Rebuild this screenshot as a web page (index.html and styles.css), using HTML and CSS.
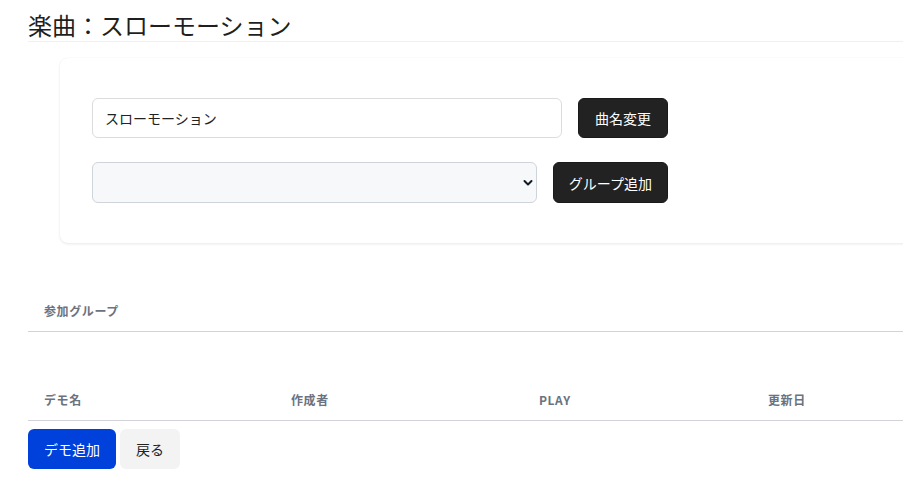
FILE: index.html
```html
<!DOCTYPE html>
<html lang="ja">
<head>
<meta charset="utf-8">
<title>楽曲：スローモーション</title>
<link rel="stylesheet" href="styles.css">
</head>
<body>
<div class="page">
  <h1 class="title">楽曲：スローモーション</h1>
  <div class="card">
    <div class="form-row">
      <input class="text-input" type="text" value="スローモーション">
      <button class="btn-dark">曲名変更</button>
    </div>
    <div class="form-row form-row-narrow">
      <div class="select-wrap">
        <select class="select"><option></option></select>
        <svg class="chevron" width="10" height="8" viewBox="0 0 10 8"><path d="M1.5 2 L5 5.5 L8.5 2" fill="none" stroke="#111827" stroke-width="2" stroke-linecap="round" stroke-linejoin="round"/></svg>
      </div>
      <button class="btn-dark">グループ追加</button>
    </div>
  </div>

  <table class="table table-groups">
    <thead><tr><th class="th">参加グループ</th></tr></thead>
    <tbody></tbody>
  </table>

  <table class="table table-demos">
    <thead>
      <tr>
        <th class="th col-1">デモ名</th>
        <th class="th col-2">作成者</th>
        <th class="th col-3">PLAY</th>
        <th class="th col-4">更新日</th>
      </tr>
    </thead>
    <tbody></tbody>
  </table>

  <div class="actions">
    <button class="btn-blue">デモ追加</button>
    <button class="btn-light">戻る</button>
  </div>
</div>
</body>
</html>
```

FILE: styles.css
```css
html, body {
  margin: 0;
  padding: 0;
  background: #ffffff;
  overflow: hidden;
}
body {
  font-family: "Noto Sans CJK JP", "Noto Sans", sans-serif;
  color: #222222;
}
.page {
  width: 972px;
  padding: 8px 0 0 28px;
}
.title {
  margin: 0;
  font-size: 24px;
  font-weight: 400;
  line-height: 33px;
  color: #1f1f1f;
  border-bottom: 1px solid #f0f0f0;
}
.card {
  margin: 16px 32px 0 32px;
  padding: 40px 32px;
  background: #ffffff;
  border-radius: 8px;
  box-shadow: 0 1px 3px rgba(0, 0, 0, 0.09), 0 0 1px rgba(0, 0, 0, 0.06);
  display: flex;
  flex-direction: column;
  gap: 24px;
}
.form-row {
  width: 576px;
  display: flex;
  gap: 16px;
  align-items: stretch;
}
.text-input {
  flex: 1;
  height: 40px;
  box-sizing: border-box;
  border: 1px solid #dcdcdc;
  border-radius: 6px;
  padding: 0 12px;
  font-family: inherit;
  font-size: 14px;
  color: #222;
  background: #fff;
  outline: none;
}
.select-wrap {
  flex: 1;
  position: relative;
  display: flex;
}
.select {
  flex: 1;
  height: 41px;
  box-sizing: border-box;
  border: 1px solid #cfd3da;
  border-radius: 6px;
  background: #f7f8fa;
  -webkit-appearance: none;
  appearance: none;
  font-family: inherit;
  font-size: 14px;
  outline: none;
}
.chevron {
  position: absolute;
  right: 4px;
  top: 17px;
}
.btn-dark {
  flex: none;
  height: 40px;
  box-sizing: border-box;
  padding: 0 16px;
  border: 1px solid #1a1a1a;
  border-radius: 6px;
  background: #222222;
  color: #ffffff;
  font-family: inherit;
  font-size: 14px;
  font-weight: 400;
}
.form-row-narrow .btn-dark {
  height: 41px;
  padding: 0 15px;
}
.table {
  border-collapse: collapse;
  width: 972px;
}
.table-groups {
  margin-top: 48px;
}
.table-demos {
  margin-top: 48px;
}
.th {
  text-align: left;
  padding: 12px 16px;
  line-height: 16px;
  font-size: 12px;
  font-weight: 700;
  color: #6b7280;
  letter-spacing: 0.05em;
  border-bottom: 1px solid #d1d3d8;
}
.col-1 { width: 247px; box-sizing: border-box; }
.col-2 { width: 248px; box-sizing: border-box; }
.col-3 { width: 229px; box-sizing: border-box; }
.col-4 { width: 248px; box-sizing: border-box; }
.actions {
  margin-top: 8px;
  display: flex;
  gap: 4px;
}
.btn-blue, .btn-light {
  height: 40px;
  padding: 0 16px;
  border: none;
  border-radius: 6px;
  font-family: inherit;
  font-size: 14px;
}
.btn-blue {
  background: #0040db;
  color: #ffffff;
}
.btn-light {
  background: #f3f3f3;
  color: #222222;
}
```
